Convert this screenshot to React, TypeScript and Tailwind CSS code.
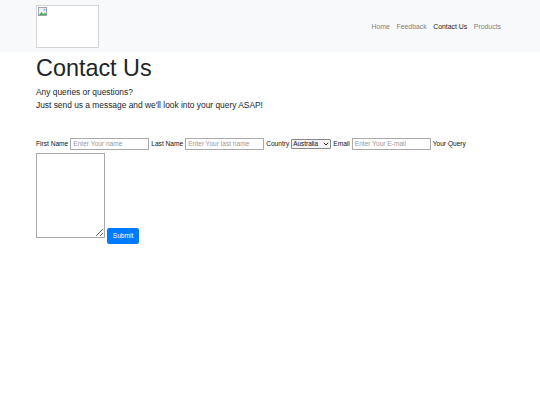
import React from 'react';

const font = { fontFamily: '"Liberation Sans", Arial, sans-serif' };

function BrokenImage() {
  return (
    <div className="relative w-[63px] h-[43px] border border-[#d4d4d4] bg-white">
      <svg className="absolute left-[1px] top-[1px]" width="10" height="10" viewBox="0 0 10 10">
        <rect x="0.5" y="0.5" width="8" height="8" fill="#eef2f6" stroke="#9aa6b4" />
        <path d="M1 8 L3.5 5 L5.5 7 L7 5.5 L8.5 8 Z" fill="#4caf50" />
        <circle cx="6.5" cy="2.8" r="1" fill="#7fa7d8" />
      </svg>
    </div>
  );
}

export default function App() {
  return (
    <div className="min-h-[405px] bg-white text-[#212529]" style={font}>
      {/* Navbar */}
      <nav className="h-[52px] bg-[#f8f9fa] flex items-center justify-between pl-[36px] pr-[39px]">
        <div className="pt-[1px]">
          <BrokenImage />
        </div>
        <ul className="flex gap-[6.5px] text-[6.9px] mt-[2px]">
          <li className="text-[#7f7f7f]">Home</li>
          <li className="text-[#7f7f7f]">Feedback</li>
          <li className="text-[#1a1a1a]">Contact Us</li>
          <li className="text-[#7f7f7f]">Products</li>
        </ul>
      </nav>

      <div className="pl-[36px]">
        <h1 className="text-[23.4px] leading-[30px] font-normal mt-[1px]">Contact Us</h1>
        <p className="text-[8.4px] leading-[13px] mt-[3px]">
          Any queries or questions?
          <br />
          Just send us a message and we'll look into your query ASAP!
        </p>

        <form className="mt-[25px] text-[6.6px] text-[#111]">
          <div className="flex items-center h-[13px]">
            <span>First Name</span>
            <input
              className="ml-[2px] w-[79px] h-[12px] border border-[#aaa] px-[2px] text-[6.6px] outline-none placeholder-[#999]"
              placeholder="Enter Your name"
            />
            <span className="ml-[2px]">Last Name</span>
            <input
              className="ml-[2px] w-[79px] h-[12px] border border-[#aaa] px-[2px] text-[6.6px] outline-none placeholder-[#999]"
              placeholder="Enter Your last name"
            />
            <span className="ml-[2px]">Country</span>
            <div className="ml-[2px] w-[40px] h-[10px] border border-[#888] rounded-[1px] flex items-center justify-between px-[1px] bg-[#f4f4f4]">
              <span className="text-[6.4px]">Australia</span>
              <svg width="6" height="4" viewBox="0 0 6 4">
                <path d="M0.8 0.8 L3 3 L5.2 0.8" stroke="#222" strokeWidth="1" fill="none" />
              </svg>
            </div>
            <span className="ml-[2px]">Email</span>
            <input
              className="ml-[2px] w-[79px] h-[12px] border border-[#aaa] px-[2px] text-[6.6px] outline-none placeholder-[#999]"
              placeholder="Enter Your E-mail"
            />
            <span className="ml-[2px]">Your Query</span>
          </div>
          <div className="flex items-end mt-[3px]">
            <textarea className="w-[69px] h-[85px] border border-[#aaa] outline-none" />
            <button
              type="button"
              className="ml-[2px] mb-[-6px] w-[32px] h-[16px] bg-[#007bff] text-white text-[6.6px] rounded-[2px]"
            >
              Submit
            </button>
          </div>
        </form>
      </div>
    </div>
  );
}
